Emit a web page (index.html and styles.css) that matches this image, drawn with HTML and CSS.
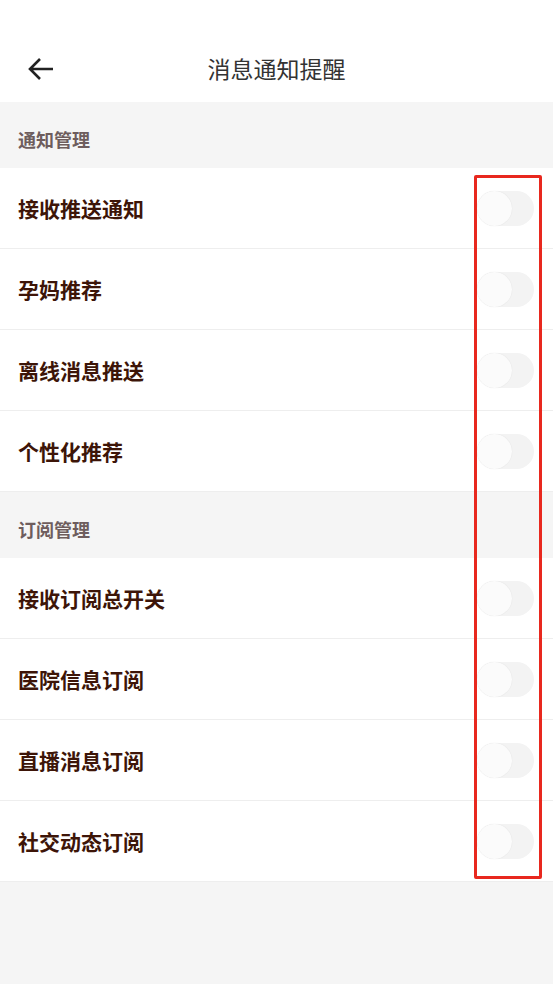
FILE: index.html
```html
<!DOCTYPE html>
<html lang="zh-CN">

<head>
    <meta charset="UTF-8">
    <meta name="viewport" content="width=device-width, initial-scale=1.0">
    <title>消息通知提醒</title>
    <link rel="stylesheet" href="styles.css">
</head>

<body>
    <div class="page">
        <div class="nav-bar">
            <span class="back">
                <svg width="28" height="24" viewBox="0 0 28 24">
                    <path d="M26 12H3M13 2L3 12l10 10" fill="none" stroke="#222" stroke-width="2.6" />
                </svg>
            </span>
            <h1 class="nav-title">消息通知提醒</h1>
        </div>

        <div class="section-title">通知管理</div>
        <div class="list">
            <div class="row"><span class="label">接收推送通知</span><span class="switch"><i class="knob"></i></span></div>
            <div class="row"><span class="label">孕妈推荐</span><span class="switch"><i class="knob"></i></span></div>
            <div class="row"><span class="label">离线消息推送</span><span class="switch"><i class="knob"></i></span></div>
            <div class="row"><span class="label">个性化推荐</span><span class="switch"><i class="knob"></i></span></div>
        </div>

        <div class="section-title">订阅管理</div>
        <div class="list">
            <div class="row"><span class="label">接收订阅总开关</span><span class="switch"><i class="knob"></i></span></div>
            <div class="row"><span class="label">医院信息订阅</span><span class="switch"><i class="knob"></i></span></div>
            <div class="row"><span class="label">直播消息订阅</span><span class="switch"><i class="knob"></i></span></div>
            <div class="row"><span class="label">社交动态订阅</span><span class="switch"><i class="knob"></i></span></div>
        </div>

        <!-- annotation box over the switches -->
        <div class="highlight"></div>
    </div>
</body>

</html>
```

FILE: styles.css
```css
body {
    margin: 0;
    background-color: #f5f5f5;
    font-family: "Noto Sans CJK SC", "Noto Sans", sans-serif;
}

.page {
    position: relative;
    min-height: 984px;
}

.nav-bar {
    height: 102px;
    background-color: #fff;
    display: flex;
    align-items: center;
    justify-content: center;
    position: relative;
    padding-top: 34px;
    box-sizing: border-box;
}

.back {
    position: absolute;
    left: 27px;
    top: 57px;
    width: 28px;
    height: 24px;
}

.back svg {
    display: block;
}

.nav-title {
    margin: 0;
    font-size: 23px;
    font-weight: normal;
    color: #333;
}

.section-title {
    height: 66px;
    padding: 7px 0 0 18px;
    box-sizing: border-box;
    display: flex;
    align-items: center;
    font-size: 18px;
    color: #6e5d5d;
    font-weight: 600;
}

.list {
    background-color: #fff;
}

.row {
    height: 80px;
    border-bottom: 1px solid #eeeeee;
    display: flex;
    align-items: center;
    justify-content: space-between;
    padding: 0 19px 0 18px;
}

.label {
    font-size: 21px;
    font-weight: bold;
    color: #3d1508;
}

.switch {
    width: 57px;
    height: 35px;
    border-radius: 18px;
    background-color: #f3f3f3;
    position: relative;
}

.knob {
    position: absolute;
    left: 0;
    top: 0;
    width: 35px;
    height: 35px;
    border-radius: 50%;
    background-color: #fbfbfb;
    box-shadow: 0 0 1px rgba(0, 0, 0, 0.12);
}

.highlight {
    position: absolute;
    left: 474px;
    top: 175px;
    width: 68px;
    height: 704px;
    box-sizing: border-box;
    border: 3px solid #e8281e;
    border-radius: 2px;
}
```
